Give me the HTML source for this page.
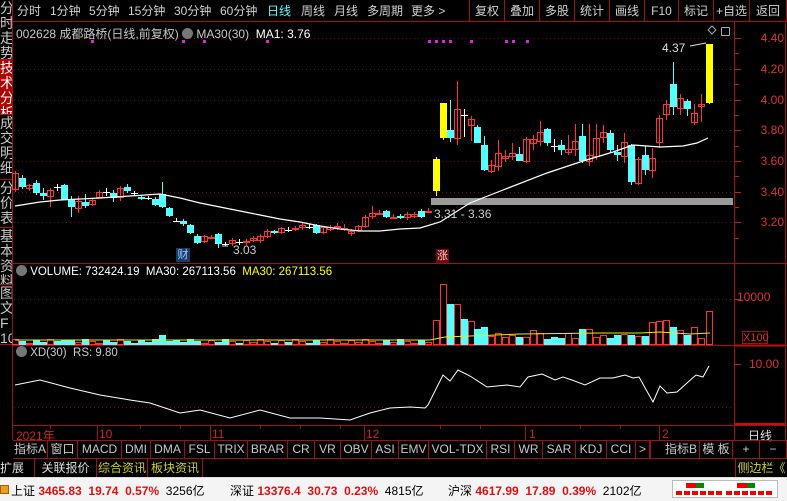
<!DOCTYPE html>
<html><head><meta charset="utf-8">
<style>
*{margin:0;padding:0;box-sizing:border-box}
body{width:787px;height:501px;background:#000;overflow:hidden;position:relative;font-family:"Liberation Sans","Noto Sans CJK SC",sans-serif;font-size:12px;color:#c0c0c0}
.abs{position:absolute}
.tb{position:absolute;top:0;height:22px;line-height:22px;color:#d0d0d0;font-size:12px;white-space:nowrap}
.tbr{position:absolute;top:0;height:22px;line-height:22px;color:#d0d0d0;font-size:12px;border-left:1px solid #a01010;text-align:center}
.side{position:absolute;left:0;width:12px;overflow:hidden;color:#c8c8c8;font-size:14px;line-height:15px;border-bottom:1px solid #a01010;padding-top:1px}
.tab{position:absolute;top:441px;height:17px;line-height:17px;font-size:12px;color:#c8c8c8;border-right:1px solid #a01010;text-align:center}
.st{position:absolute;top:482px;font-size:12px;white-space:nowrap}
.r{color:#e01010;font-weight:bold}
</style></head><body>
<div class="abs" style="left:0;top:0;width:787px;height:22px;background:#000;border-bottom:1px solid #a01010"></div>
<div class="tb" style="left:17px">分时</div>
<div class="tb" style="left:50px">1分钟</div>
<div class="tb" style="left:89px">5分钟</div>
<div class="tb" style="left:128px">15分钟</div>
<div class="tb" style="left:174px">30分钟</div>
<div class="tb" style="left:220px">60分钟</div>
<div class="tb" style="left:267px;color:#5ff">日线</div>
<div class="tb" style="left:301px">周线</div>
<div class="tb" style="left:334px">月线</div>
<div class="tb" style="left:367px">多周期</div>
<div class="tb" style="left:411px">更多 &gt;</div>
<div class="tbr" style="left:469px;width:35px">复权</div>
<div class="tbr" style="left:504px;width:35px">叠加</div>
<div class="tbr" style="left:539px;width:35px">多股</div>
<div class="tbr" style="left:574px;width:35px">统计</div>
<div class="tbr" style="left:609px;width:35px">画线</div>
<div class="tbr" style="left:644px;width:34px">F10</div>
<div class="tbr" style="left:678px;width:35px">标记</div>
<div class="tbr" style="left:713px;width:36px">+自选</div>
<div class="tbr" style="left:749px;width:38px;border-right:1px solid #a01010">返回</div>

<div class="abs" style="left:12px;top:0;width:1px;height:440px;background:#a01010"></div>
<div class="side" style="top:0;height:60px">分<br>时<br>走<br>势</div>
<div class="side" style="top:60px;height:55px;background:#b00000;color:#fff">技<br>术<br>分<br>析</div>
<div class="side" style="top:115px;height:65px">成<br>交<br>明<br>细</div>
<div class="side" style="top:180px;height:48px">分<br>价<br>表</div>
<div class="side" style="top:228px;height:57px">基<br>本<br>资<br>料</div>
<div class="side" style="top:285px;height:60px">图<br>文<br>F<br>10</div>

<svg class="abs" style="left:0;top:0" width="787" height="501" id="ch"></svg>

<div class="abs" style="left:16px;top:25px;font-size:12px;color:#c8c8c8;white-space:nowrap">002628 成都路桥(日线,前复权) <span style="display:inline-block;width:11px;height:11px;border-radius:6px;background:#777;vertical-align:-1px"></span> MA30(30) &nbsp;<span style="color:#fff">MA1: 3.76</span></div>
<div class="abs" style="left:16px;top:265px;font-size:11.5px;color:#fff;white-space:nowrap"><span style="display:inline-block;width:11px;height:11px;border-radius:6px;background:#777;vertical-align:-1px"></span> VOLUME: 732424.19 &nbsp;MA30: 267113.56 &nbsp;<span style="color:#ff0">MA30: 267113.56</span></div>
<div class="abs" style="left:16px;top:346px;font-size:11.5px;color:#ccc;white-space:nowrap"><span style="display:inline-block;width:11px;height:11px;border-radius:6px;background:#777;vertical-align:-1px"></span> XD(30) &nbsp;RS: 9.80</div>

<div class="abs" style="left:176px;top:248px;width:14px;height:14px;background:#1a3a6a;color:#9cf;font-size:11px;line-height:14px;text-align:center">财</div>
<div class="abs" style="left:436px;top:249px;width:13px;height:14px;background:#6a0a0a;color:#fcc;font-size:11px;line-height:14px;text-align:center">涨</div>
<div class="abs" style="left:233px;top:243px;color:#ccc;font-size:12px">3.03</div>
<div class="abs" style="left:434px;top:207px;color:#ccc;font-size:12px">3.31 - 3.36</div>
<div class="abs" style="left:662px;top:41px;color:#ddd;font-size:12px">4.37</div>
<div class="abs" style="left:721px;top:27px;width:9px;height:9px;border:1px solid #aaa;border-radius:1px"></div>
<div class="abs" style="left:742px;top:331px;width:26px;height:13px;border:1px solid #a01010;color:#e03030;font-size:11px;line-height:12px;text-align:center">X100</div>
<div class="abs" style="left:737px;top:290px;color:#e03030;font-size:12px">10000</div>
<div class="abs" style="left:749px;top:357px;color:#e03030;font-size:12px">10.00</div>

<div class="abs" style="left:16px;top:427px;color:#d02020;font-size:12px">2021年</div>
<div class="abs" style="left:99px;top:427px;color:#d02020;font-size:12px">10</div>
<div class="abs" style="left:212px;top:427px;color:#d02020;font-size:12px">11</div>
<div class="abs" style="left:366px;top:427px;color:#d02020;font-size:12px">12</div>
<div class="abs" style="left:529px;top:427px;color:#d02020;font-size:12px">1</div>
<div class="abs" style="left:662px;top:427px;color:#d02020;font-size:12px">2</div>
<div class="abs" style="left:748px;top:427px;color:#ddd;font-size:12px">日线</div>

<div class="abs" style="left:13px;top:440px;width:774px;height:1px;background:#a01010"></div>
<div class="abs" style="left:13px;top:458px;width:774px;height:1px;background:#a01010"></div>
<div class="tab" style="left:13px;width:35px">指标A</div>
<div class="tab" style="left:48px;width:30px">窗口</div>
<div class="tab" style="left:78px;width:44px">MACD</div>
<div class="tab" style="left:122px;width:29px">DMI</div>
<div class="tab" style="left:151px;width:34px">DMA</div>
<div class="tab" style="left:185px;width:30px">FSL</div>
<div class="tab" style="left:215px;width:33px">TRIX</div>
<div class="tab" style="left:248px;width:40px">BRAR</div>
<div class="tab" style="left:288px;width:27px">CR</div>
<div class="tab" style="left:315px;width:26px">VR</div>
<div class="tab" style="left:341px;width:31px">OBV</div>
<div class="tab" style="left:372px;width:27px">ASI</div>
<div class="tab" style="left:399px;width:30px">EMV</div>
<div class="tab" style="left:429px;width:58px">VOL-TDX</div>
<div class="tab" style="left:487px;width:28px">RSI</div>
<div class="tab" style="left:515px;width:28px">WR</div>
<div class="tab" style="left:543px;width:33px">SAR</div>
<div class="tab" style="left:576px;width:31px">KDJ</div>
<div class="tab" style="left:607px;width:29px">CCI</div>
<div class="tab" style="left:636px;width:14px">&gt;</div>
<div class="tab" style="left:650px;width:50px;border-left:1px solid #a01010;text-align:right;padding-right:2px">指标B</div>
<div class="tab" style="left:700px;width:33px">模 板</div>
<div class="tab" style="left:733px;width:27px">+</div>
<div class="tab" style="left:760px;width:27px">−</div>

<div class="abs" style="left:0;top:459px;width:787px;height:18px;background:#000"></div>
<div class="abs" style="left:0;top:459px;height:18px;line-height:18px;color:#ddd;width:35px;border-right:1px solid #a01010">扩展∧</div>
<div class="abs" style="left:35px;top:459px;height:18px;line-height:18px;color:#ddd;width:62px;border-right:1px solid #a01010;text-align:center">关联报价</div>
<div class="abs" style="left:97px;top:459px;height:18px;line-height:18px;color:#cc3;width:51px;border-right:1px solid #a01010;text-align:center">综合资讯</div>
<div class="abs" style="left:148px;top:459px;height:18px;line-height:18px;color:#cc3;width:55px;border-right:1px solid #a01010;text-align:center">板块资讯</div>
<div class="abs" style="left:735px;top:459px;height:18px;line-height:18px;color:#cc3;width:52px;border-left:1px solid #a01010;text-align:center">侧边栏《</div>

<div class="abs" style="left:0;top:477px;width:787px;height:24px;background:#f4f4f4;border-top:1px solid #ddd"></div>
<div class="abs" style="left:0;top:485px;width:9px;height:9px;background:#e8a020;border:1px solid #a06010"></div>
<div class="st" style="left:11px;color:#000">上证 <span class="r">3465.83</span> &nbsp;<span class="r">19.74</span> &nbsp;<span class="r">0.57%</span> &nbsp;3256亿</div>
<div class="st" style="left:230px;color:#000">深证 <span class="r">13376.4</span> &nbsp;<span class="r">30.73</span> &nbsp;<span class="r">0.23%</span> &nbsp;4815亿</div>
<div class="st" style="left:448px;color:#000">沪深 <span class="r">4617.99</span> &nbsp;<span class="r">17.89</span> &nbsp;<span class="r">0.39%</span> &nbsp;2102亿</div>
<div class="abs" style="left:672px;top:480px;width:106px;height:18px;border:1px solid #bbb;background:#fff"></div>
<div class="abs" style="left:686px;top:483px;width:10px;height:5px;background:#e00"></div><div class="abs" style="left:696px;top:483px;width:8px;height:5px;background:#080"></div>
<div class="abs" style="left:737px;top:483px;width:10px;height:5px;background:#e00"></div><div class="abs" style="left:747px;top:483px;width:8px;height:5px;background:#080"></div>
<div class="abs" style="left:676px;top:491px;width:46px;height:4px;background:repeating-linear-gradient(90deg,#e00 0 6px,#fff 6px 8px)"></div>
<div class="abs" style="left:726px;top:491px;width:46px;height:4px;background:repeating-linear-gradient(90deg,#e00 0 6px,#fff 6px 8px)"></div>

<script>
var s=document.getElementById('ch'),h='';
function L(x1,y1,x2,y2,c,w,d){h+='<line x1="'+x1+'" y1="'+y1+'" x2="'+x2+'" y2="'+y2+'" stroke="'+c+'" stroke-width="'+(w||1)+'"'+(d?' stroke-dasharray="'+d+'"':'')+'/>';}
function R(x,y,w,hh,f,st){h+='<rect x="'+x+'" y="'+y+'" width="'+w+'" height="'+hh+'" fill="'+f+'"'+(st?' stroke="'+st+'"':'')+'/>';}
L(13,263.5,787,263.5,'#a01010');L(13,345.5,787,345.5,'#a01010');L(13,425.5,787,425.5,'#a01010');
L(734.5,22,734.5,440,'#a01010');L(785.5,22,785.5,440,'#a01010');
L(735,345.5,785,345.5,'#c01010',2);L(735,424,785,424,'#c01010',2);
var pl=[[38,'4.40'],[69,'4.20'],[100,'4.00'],[130,'3.80'],[161,'3.60'],[192,'3.40'],[222,'3.20']];
pl.forEach(function(p){L(14,p[0]+.5,733,p[0]+.5,'#6a1010',1,'1,3');L(735,p[0]+.5,741,p[0]+.5,'#c02020');h+='<text x="784" y="'+(p[0]+4)+'" fill="#e03030" font-size="12" text-anchor="end" font-family="Liberation Sans">'+p[1]+'</text>';});
[53,84,115,146,176,207,238].forEach(function(y){L(735,y+.5,739,y+.5,'#c02020');});
L(14,299.5,733,299.5,'#6a1010',1,'1,3');L(735,299.5,741,299.5,'#c02020');
L(14,407.5,733,407.5,'#6a1010',1,'1,3');L(735,364.5,741,364.5,'#c02020');
[99,212,366,527,661].forEach(function(x){L(x-1.5,426,x-1.5,440,'#a01010');});
[50,140,180,260,300,340,440,480,580,620].forEach(function(x){L(x+.5,426,x+.5,429,'#a01010');});
R(431,198,302,7,'#9a9a9a');
var C=[[15,173,190,171,192,'r'],[22,178,187,175,189,'c'],[29,185,189,184,191,'r'],[36,183,193,180,195,'c'],[43,193,196,188,200,'c'],[50,190,197,188,207,'r'],[57,187,187,184,191,'w'],[64,185,200,184,200,'c'],[71,199,207,196,217,'c'],[78,201,209,196,213,'r'],[85,202,206,194,208,'c'],[92,200,205,199,206,'r'],[99,192,198,190,198,'r'],[106,192,192,188,196,'w'],[113,193,198,190,202,'c'],[120,188,198,186,201,'r'],[127,187,191,184,193,'c'],[134,193,193,191,195,'w'],[141,197,199,195,200,'c'],[148,198,198,196,200,'w'],[155,199,205,197,206,'c'],[162,194,207,182,208,'c'],[169,208,216,207,217,'c'],[176,221,221,218,222,'w'],[183,221,224,219,226,'c'],[190,225,233,224,234,'c'],[197,236,243,234,244,'c'],[204,236,242,235,243,'r'],[211,237,237,235,239,'r'],[218,234,244,233,248,'c'],[225,244,244,242,246,'w'],[232,240,244,238,246,'r'],[239,242,242,239,245,'w'],[246,241,243,239,245,'r'],[253,238,241,236,242,'r'],[260,236,241,234,243,'r'],[267,231,237,229,238,'r'],[274,231,233,230,234,'c'],[281,228,233,227,234,'r'],[288,230,230,227,232,'w'],[295,228,230,226,231,'r'],[302,225,228,223,230,'r'],[309,227,227,224,229,'w'],[316,225,233,224,234,'c'],[323,227,233,226,234,'r'],[330,227,230,225,231,'r'],[337,226,228,223,230,'r'],[344,228,228,224,231,'r'],[351,231,234,229,236,'r'],[358,226,231,225,232,'r'],[365,217,227,215,228,'r'],[372,213,217,206,219,'r'],[379,213,213,210,215,'r'],[386,211,217,210,218,'c'],[393,217,217,214,219,'r'],[400,216,218,214,219,'c'],[407,214,218,212,220,'r'],[414,214,217,212,218,'r'],[421,211,217,209,218,'c'],[428,211,211,208,213,'r'],
[436,159,191,157,196,'y'],[443,103,138,103,140,'y'],[450,130,138,100,142,'c'],[457,109,139,81,145,'r'],[464,115,115,109,137,'w'],[471,119,126,116,141,'r'],[477,127,143,125,143,'c'],[484,145,170,136,171,'c'],[491,165,172,160,173,'r'],[498,153,167,140,171,'r'],[505,156,159,150,162,'r'],[512,153,157,143,160,'r'],[519,154,161,147,161,'c'],[526,139,162,137,163,'r'],[533,139,144,135,150,'r'],[540,132,142,121,146,'r'],[547,129,143,128,146,'c'],[554,146,146,139,152,'w'],[561,145,150,140,155,'c'],[568,149,153,135,155,'r'],[575,141,150,124,156,'r'],[582,136,161,124,163,'c'],[589,155,162,124,166,'r'],[596,138,157,124,160,'r'],[603,132,138,125,143,'r'],[610,133,150,130,152,'c'],[617,152,155,145,161,'c'],[624,142,157,133,163,'r'],[631,145,182,144,185,'c'],[638,159,184,157,185,'r'],[645,155,170,146,175,'c'],[652,158,171,148,178,'r'],[659,118,143,115,148,'r'],[666,104,115,100,120,'r'],[673,84,107,62,115,'c'],[680,98,109,94,115,'r'],[687,101,109,99,116,'c'],[694,113,123,104,125,'r'],[701,104,107,94,122,'r'],[709,44,103,44,104,'y']];
var col={r:'#ff3232',c:'#54ffff',w:'#ffffff',y:'#ffff00'};
C.forEach(function(k){var x=k[0],c=col[k[5]];L(x+.5,k[3],x+.5,k[4],c);
 if(k[5]=='r'){R(x-2.5,k[1]+.5,6,Math.max(1,k[2]-k[1]-1),'none',c);}
 else if(k[5]=='w'){L(x-3,k[1]+.5,x+4,k[1]+.5,c);}
 else{R(x-3,k[1],7,Math.max(1,k[2]-k[1]),c);}});
h+='<polyline fill="none" stroke="#fff" stroke-width="1.2" points="15,206 40,202 60,200 100,198 130,196 160,194 180,198 200,203 220,207 240,211 260,215 280,219 300,222 320,226 340,229 360,231 380,231 400,229 420,228 440,222 470,203 503,190 547,173 580,162 613,152 633,145 660,147 683,146 697,143 708,138"/>';
L(228,246,222,246,'#ccc');L(690,46,706,43,'#ddd');
h+='<polygon points="712,26 716,30 712,34 708,30" fill="none" stroke="#aaa"/>';
[91,182,203,266,428,435,442,449,470,505,512,526].forEach(function(x){R(x,40,3,3,'#e020e0');});
var vt={436:320,443:284,450:304,457:304,464:319,471:321,477:329,484:327,491:336,498:333,505:337,512:335,519:337,526:337,533:330,540:333,547:339,554:337,561:338,568:333,575:338,582:329,589:329,596:337,603:335,610:338,617:335,624:334,631:335,638:336,645:336,652:322,659:321,666:320,673:327,680:330,687:335,694:327,701:338,709:311};
C.forEach(function(k,i){var x=k[0];var top=vt[x]||(339+((i*7)%5)-(i==21?6:0)-(i==7?3:0)-(i==22?2:0));
 var c=k[5]=='c'?'#54ffff':(k[5]=='w'?'#54ffff':'#ff3232');
 if(k[5]=='c'||k[5]=='w')R(x-3,top,7,345-top,c);else R(x-2.5,top+.5,6,344-top,'none',c);});
h+='<polyline fill="none" stroke="#ee0" points="15,340 200,340 430,340 445,337 470,336 520,334 600,333 640,333 660,332 690,334 710,333"/>';
h+='<polyline fill="none" stroke="#fff" points="15,385 40,380 70,388 100,395 130,400 150,403 180,413 200,410 230,418 260,410 290,418 320,418 350,420 370,413 390,408 410,407 425,408 428,405 443,375 450,381 458,370 470,376 487,387 507,385 520,387 528,377 542,374 555,380 563,377 572,380 585,385 600,378 613,378 625,375 633,378 639,377 653,402 660,386 667,393 677,392 687,383 696,375 703,377 709,366"/>';
s.innerHTML=h;
</script>
</body></html>
